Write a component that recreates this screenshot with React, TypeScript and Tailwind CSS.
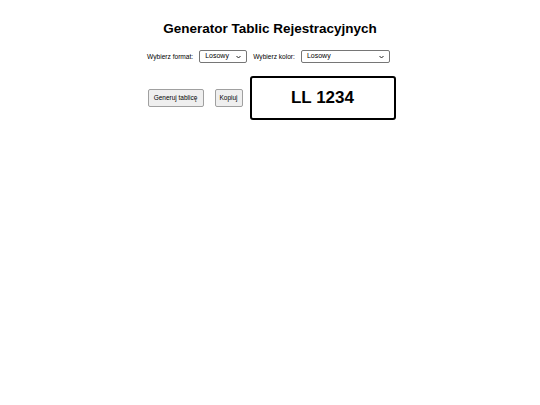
export default function App() {
  return (
    <div className="min-h-[405px] w-full bg-white text-black" style={{ fontFamily: '"Liberation Sans", Arial, sans-serif' }}>
      <div className="flex flex-col items-center pt-[20px]">
        <h1 className="text-[13.5px] font-bold leading-[17px]">Generator Tablic Rejestracyjnych</h1>
        <div className="mt-[13px] flex items-center pr-[3px] text-[6.6px]">
          <label className="mr-[6px]">Wybierz format:</label>
          <div className="flex h-[13px] w-[48px] items-center justify-between rounded-[2px] border border-[#767676] bg-white px-[5px] text-[7px]">
            <span>Losowy</span>
            <Chevron />
          </div>
          <label className="ml-[6px] mr-[6px]">Wybierz kolor:</label>
          <div className="flex h-[13px] w-[89px] items-center justify-between rounded-[2px] border border-[#767676] bg-white px-[5px] text-[7px]">
            <span>Losowy</span>
            <Chevron />
          </div>
        </div>
        <div className="mt-[13px] flex items-center pl-[3px]">
          <button className="h-[18px] w-[56px] rounded-[2px] border border-[#a0a0a0] bg-[#efefef] text-[6.5px]">Generuj tablicę</button>
          <button className="ml-[11px] h-[18px] w-[28px] rounded-[2px] border border-[#a0a0a0] bg-[#efefef] text-[6.5px]">Kopiuj</button>
          <div className="ml-[7px] flex h-[44px] w-[146px] items-center justify-center rounded-[3px] border-2 border-black">
            <span className="text-[17px] font-bold">LL 1234</span>
          </div>
        </div>
      </div>
    </div>
  );
}

function Chevron() {
  return (
    <svg width="5" height="4" viewBox="0 0 10 6" fill="none" stroke="#222" strokeWidth="2">
      <path d="M1 1l4 4 4-4" />
    </svg>
  );
}
